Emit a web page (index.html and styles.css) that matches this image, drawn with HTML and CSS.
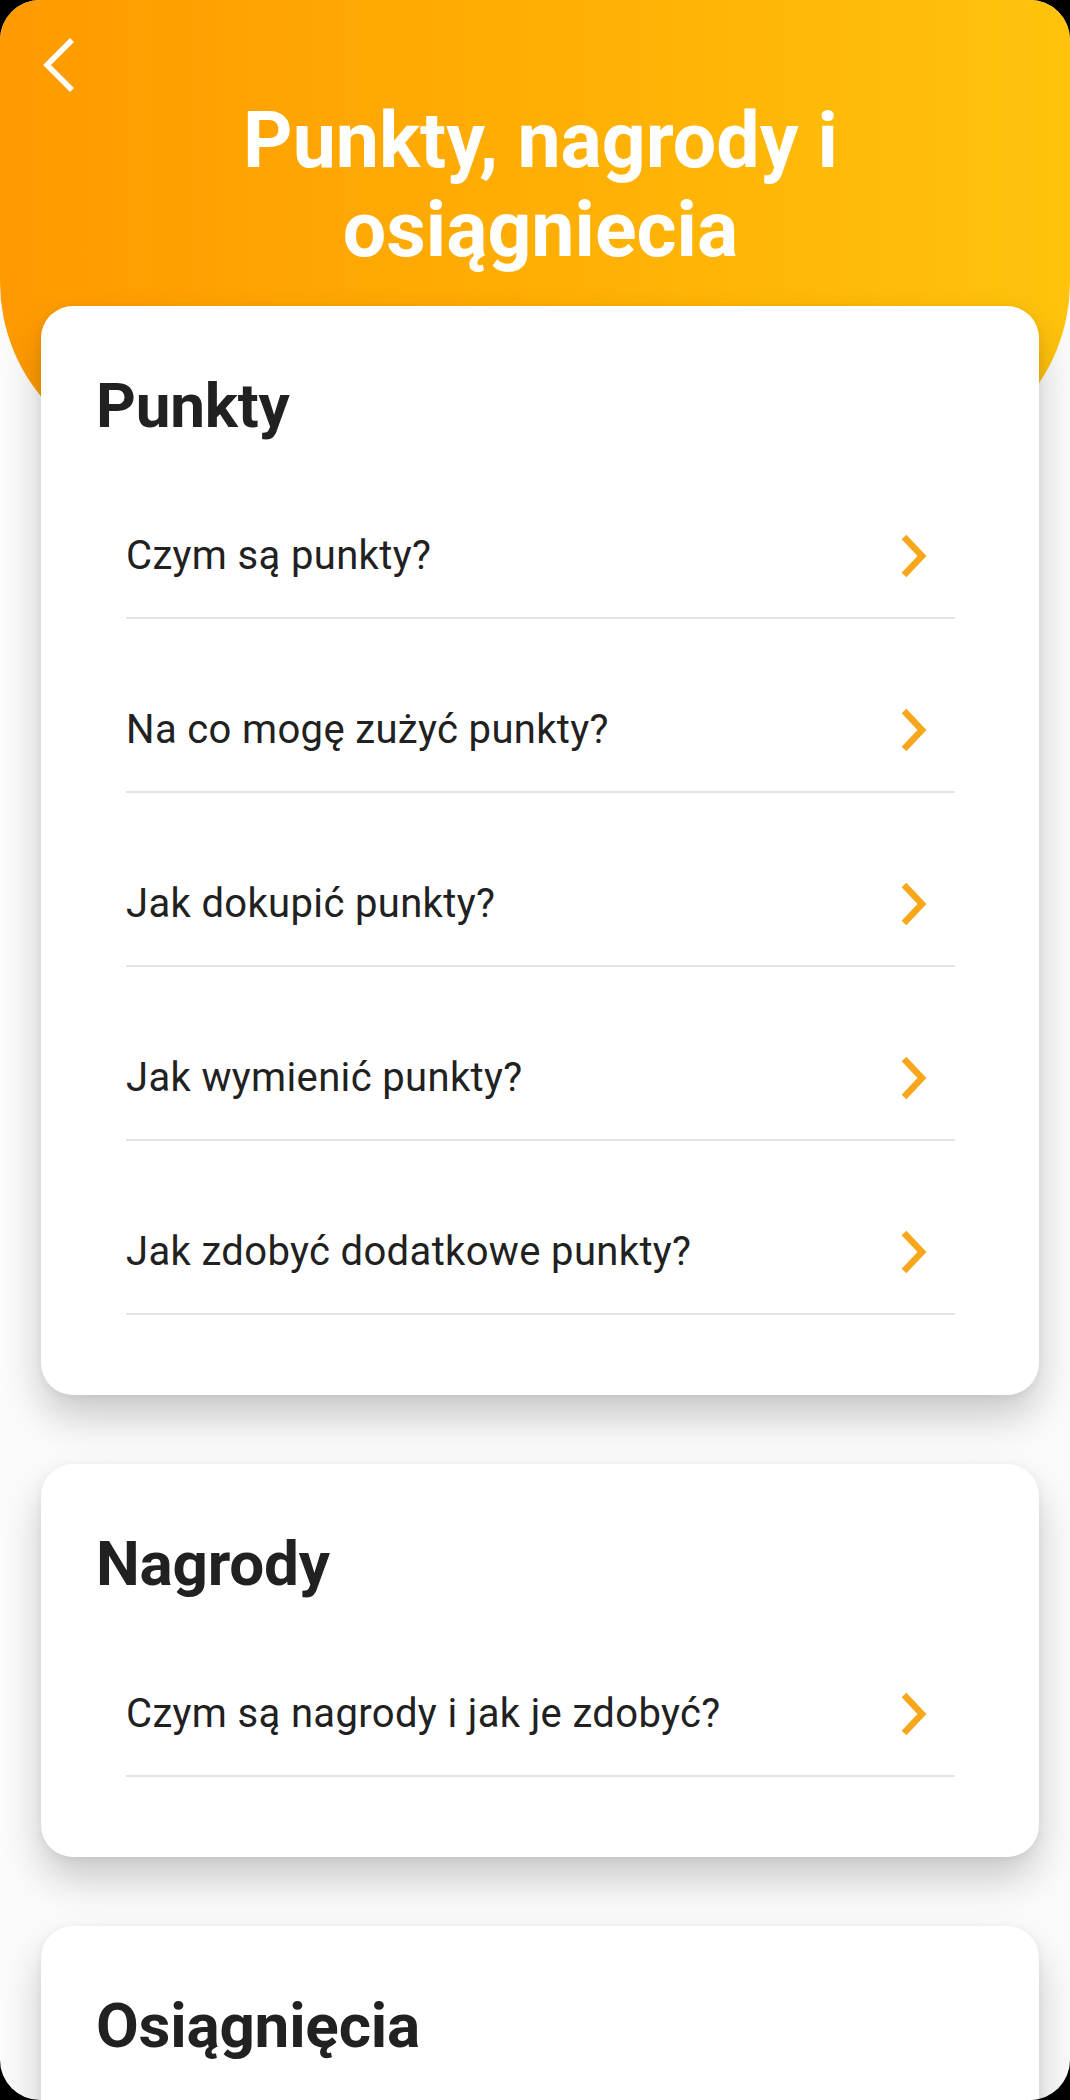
FILE: index.html
```html
<!DOCTYPE html>
<html lang="pl">
<head>
<meta charset="utf-8">
<title>Punkty, nagrody i osiągniecia</title>
<link rel="stylesheet" href="styles.css">
</head>
<body>
<div class="screen">
  <header class="hero">
    <a class="back" href="#" aria-label="Wstecz">
      <svg width="40" height="60" viewBox="0 0 40 60"><path d="M34 5 L9 30 L34 55" fill="none" stroke="#fff" stroke-width="5.5"/></svg>
    </a>
    <h1 class="title">Punkty, nagrody i<br>osiągniecia</h1>
  </header>
  <main class="cards">
    <section class="card">
      <h2 class="card-title">Punkty</h2>
      <ul class="list">
        <li class="row"><span>Czym są punkty?</span><svg class="chev" width="30" height="50" viewBox="0 0 30 50"><path d="M6 6 L24 25 L6 44" fill="none" stroke="#f8a71c" stroke-width="6.5"/></svg></li>
        <li class="row"><span>Na co mogę zużyć punkty?</span><svg class="chev" width="30" height="50" viewBox="0 0 30 50"><path d="M6 6 L24 25 L6 44" fill="none" stroke="#f8a71c" stroke-width="6.5"/></svg></li>
        <li class="row"><span>Jak dokupić punkty?</span><svg class="chev" width="30" height="50" viewBox="0 0 30 50"><path d="M6 6 L24 25 L6 44" fill="none" stroke="#f8a71c" stroke-width="6.5"/></svg></li>
        <li class="row"><span>Jak wymienić punkty?</span><svg class="chev" width="30" height="50" viewBox="0 0 30 50"><path d="M6 6 L24 25 L6 44" fill="none" stroke="#f8a71c" stroke-width="6.5"/></svg></li>
        <li class="row"><span>Jak zdobyć dodatkowe punkty?</span><svg class="chev" width="30" height="50" viewBox="0 0 30 50"><path d="M6 6 L24 25 L6 44" fill="none" stroke="#f8a71c" stroke-width="6.5"/></svg></li>
      </ul>
    </section>
    <section class="card">
      <h2 class="card-title">Nagrody</h2>
      <ul class="list">
        <li class="row"><span>Czym są nagrody i jak je zdobyć?</span><svg class="chev" width="30" height="50" viewBox="0 0 30 50"><path d="M6 6 L24 25 L6 44" fill="none" stroke="#f8a71c" stroke-width="6.5"/></svg></li>
      </ul>
    </section>
    <section class="card">
      <h2 class="card-title">Osiągnięcia</h2>
    </section>
  </main>
</div>
</body>
</html>
```
FILE: styles.css
```css
* { box-sizing: border-box; }
html, body { margin: 0; padding: 0; background: #000; }
body { font-family: Roboto, "Noto Sans", "Liberation Sans", sans-serif; }

.screen {
  width: 1070px;
  height: 2100px;
  border-radius: 40px;
  overflow: hidden;
  background: #fbfbfb;
}

.hero {
  height: 462px;
  background: linear-gradient(90deg, #ff9a00 0%, #ffb004 55%, #ffc30c 100%);
  border-radius: 0 0 180px 180px;
  padding-top: 35px;
}

.back {
  display: block;
  width: 40px;
  height: 60px;
  margin-left: 38px;
}
.back svg { display: block; }

.title {
  margin: 2px 0 0;
  padding-left: 11px;
  text-align: center;
  color: #fff;
  font-weight: 700;
  font-size: 77px;
  line-height: 89px;
}

.cards {
  margin: -156px 31px 0 41px;
  display: flex;
  flex-direction: column;
  gap: 69px;
  position: relative;
}

.card {
  background: #fff;
  border-radius: 32px;
  padding: 64px 84px 80px 55px;
  box-shadow: 0 22px 40px rgba(0, 0, 0, 0.2), 0 2px 8px rgba(0, 0, 0, 0.06);
}

.card-title {
  margin: 0 0 3px;
  font-size: 62px;
  line-height: 72px;
  font-weight: 700;
  color: #212121;
  letter-spacing: -0.2px;
}

.list {
  list-style: none;
  margin: 0 0 0 30px;
  padding: 0;
}

.row {
  display: flex;
  align-items: center;
  justify-content: space-between;
  padding: 86px 0 36px;
  border-bottom: 2px solid #e4e4e4;
  font-size: 40px;
  line-height: 50px;
  letter-spacing: 0.35px;
  color: #212121;
}

.chev {
  display: block;
  margin-right: 27px;
  flex: none;
}
```
